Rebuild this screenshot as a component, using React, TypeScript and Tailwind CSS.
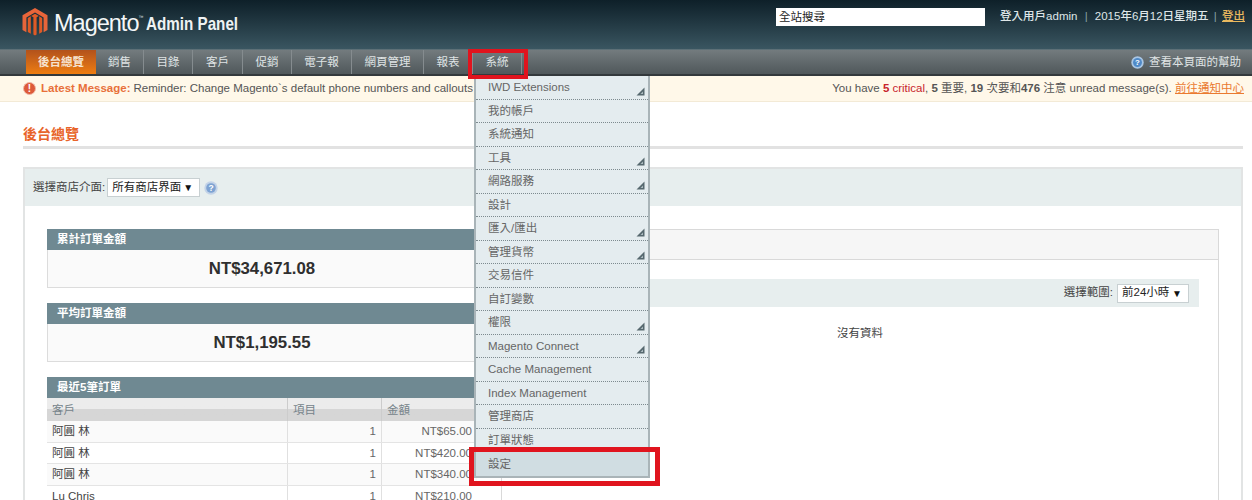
import React from "react";

const navItems = [
  { label: "銷售", w: "w-[48px]" },
  { label: "目錄", w: "w-[49px]" },
  { label: "客戶", w: "w-[50px]" },
  { label: "促銷", w: "w-[49px]" },
  { label: "電子報", w: "w-[60px]" },
  { label: "網頁管理", w: "w-[72px]" },
  { label: "報表", w: "w-[49px]" },
  { label: "系統", w: "w-[49px]" },
];

const menu: [string, boolean][] = [
  ["IWD Extensions", true],
  ["我的帳戶", false],
  ["系統通知", false],
  ["工具", true],
  ["網路服務", true],
  ["設計", false],
  ["匯入/匯出", true],
  ["管理貨幣", true],
  ["交易信件", false],
  ["自訂變數", false],
  ["權限", true],
  ["Magento Connect", true],
  ["Cache Management", false],
  ["Index Management", false],
  ["管理商店", false],
  ["訂單狀態", false],
];

const rows = [
  ["阿圓 林", "1", "NT$65.00"],
  ["阿圓 林", "1", "NT$420.00"],
  ["阿圓 林", "1", "NT$340.00"],
  ["Lu Chris", "1", "NT$210.00"],
];

function Logo() {
  return (
    <svg width="26" height="30" viewBox="0 0 26 30" className="shrink-0">
      <path d="M13 0 L25.5 7.2 V22 L21.6 24.2 V9.4 L13 4.4 L4.4 9.4 V24.2 L0.5 22 V7.2 Z" fill="#e8653a" />
      <path d="M11.4 9.2 V26.6 L13 27.6 L14.6 26.6 V9.2 L17.2 7.8 V25.8 L20.2 24 V10 L13 5.8 L5.8 10 V24 L8.8 25.8 V7.8 Z" fill="#df5a26" />
    </svg>
  );
}

function Arrow() {
  return (
    <svg width="9" height="9" viewBox="0 0 9 9" className="absolute right-[3px] bottom-[3px]">
      <path d="M8.5 0.5 V8.5 H0.5 Z" fill="#56686f" />
      <path d="M7 4.5 V7 H4.5 Z" fill="#aebcc1" />
    </svg>
  );
}

function HelpIcon({ size = 14, pale = false }: { size?: number; pale?: boolean }) {
  return (
    <svg width={size} height={size} viewBox="0 0 14 14" className="shrink-0">
      <circle cx="7" cy="7" r="6.7" fill={pale ? "#c3d3e8" : "#a9c6e4"} />
      <circle cx="7" cy="7" r="4.8" fill={pale ? "#7ea3d2" : "#4f8ac8"} />
      <text x="7" y="10" textAnchor="middle" fontSize="8.5" fontWeight="700" fill="#ffffff" fontFamily="Liberation Sans">?</text>
    </svg>
  );
}

function Select({ text, w }: { text: string; w: string }) {
  return (
    <div className={`${w} h-[19px] bg-white border border-[#c8d0d2] flex items-center justify-between pl-[4px] pr-[6px] text-[11.5px] text-[#222]`}>
      <span>{text}</span>
      <span className="text-[10px] text-[#111]">▼</span>
    </div>
  );
}

function Stat({ title, value }: { title: string; value: string }) {
  return (
    <div>
      <div className="h-[21px] bg-[#6f8992] pl-[10px] leading-[20px] font-bold text-white">{title}</div>
      <div className="h-[38px] bg-[#fafafa] border border-t-0 border-[#dcdcdc] flex items-center justify-center text-[16.8px] font-bold text-[#2f2f2f]">{value}</div>
    </div>
  );
}

export default function App() {
  return (
    <div className="relative w-[1252px] h-[500px] overflow-hidden bg-white font-['Liberation_Sans','Noto_Sans_CJK_TC',sans-serif] text-[11.5px] text-[#444]">
      {/* Header */}
      <header className="h-[49px] bg-gradient-to-b from-[#0e2029] to-[#3a5661] flex justify-between pl-[22px] pr-[7px]">
        <div className="flex items-start pt-[8px]">
          <Logo />
          <span className="ml-[6px] text-[23.5px] leading-[30px] tracking-[-1px] text-[#f4f7f8]">Magento</span>
          <span className="text-[5px] leading-[18px] text-[#dfe5e6]">™</span>
          <span className="ml-[3px] mt-[3px] w-[92px] text-[19px] leading-[26px] font-bold text-[#eef2f3] scale-x-[0.8] origin-left whitespace-nowrap">Admin Panel</span>
        </div>
        <div className="flex items-start pt-[8px]">
          <div className="w-[209px] h-[18px] bg-white pl-[3px] leading-[19px] text-[#222]">全站搜尋</div>
          <div className="ml-[15px] leading-[17px] text-[#dfe6e8] font-medium">
            登入用戶admin<span className="mx-[4px] text-[#8aa0a8]"> | </span>2015年6月12日星期五<span className="mx-[2px] text-[#8aa0a8]"> | </span><span className="underline text-[#e9b95f]">登出</span>
          </div>
        </div>
      </header>

      {/* Nav */}
      <nav className="h-[27px] border-t border-[#5d7077] border-b-[2px] border-b-[#33393c] bg-gradient-to-b from-[#737b7e] to-[#50585b] flex justify-between pl-[26px] pr-[11px]">
        <div className="flex">
          <div className="w-[70px] h-full pt-[1px] bg-gradient-to-b from-[#b2521b] to-[#ee7d10] flex items-center justify-center font-bold text-[#f6e3d0]">後台總覽</div>
          {navItems.map((n) => (
            <div key={n.label} className={`${n.w} h-full pt-[1px] border-r border-[#858c8f] flex items-center justify-center text-[#dfe3e4]`}>
              {n.label}
            </div>
          ))}
        </div>
        <div className="flex items-center gap-[5px] pt-[1px] text-[#dfe3e4]">
          <HelpIcon size={13} />
          查看本頁面的幫助
        </div>
      </nav>

      {/* Notice */}
      <div className="h-[26px] bg-[#fff8e9] border-b border-[#f3ead6] flex items-center justify-between pl-[23px] pr-[8px] text-[#555]">
        <div className="flex items-center">
          <span className="w-[13px] h-[13px] rounded-full bg-[#dd5a3a] border border-[#f0b8a6] text-white text-[10px] leading-[11px] font-bold text-center mr-[5px]">!</span>
          <span className="font-bold text-[#e8703a]">Latest Message:</span>
          <span className="ml-[3px] w-[340px] truncate">Reminder: Change Magento`s default phone numbers and callouts</span>
        </div>
        <div>
          You have <span className="text-[#c8242c]"><b>5</b> critical</span>, <b>5</b> 重要, <b>19</b> 次要和<b>476</b> 注意 unread message(s). <span className="underline text-[#ea7a30]">前往通知中心</span>
        </div>
      </div>

      {/* Main */}
      <main className="pl-[23px] pr-[9px]">
        <div className="pt-[22px] h-[47px] border-b-[3px] border-[#e2e2e2] text-[14px] leading-[20px] font-bold text-[#e8642a]">後台總覽</div>

        <section className="mt-[18px] border-2 border-[#e2e4e4] border-b-0 h-[400px]">
          <div className="h-[37px] bg-[#e7eeee] flex items-center pl-[8px] text-[#444]">
            選擇商店介面:
            <Select text="所有商店界面" w="w-[93px] ml-[2px]" />
            <span className="ml-[4px]"><HelpIcon size={14} pale /></span>
          </div>

          <div className="flex pl-[22px] pt-[23px] pr-[22px]">
            <div className="w-[430px] flex flex-col gap-[15px]">
              <Stat title="累計訂單金額" value="NT$34,671.08" />
              <Stat title="平均訂單金額" value="NT$1,195.55" />
              <div>
                <div className="h-[21px] bg-[#6f8992] pl-[10px] leading-[20px] font-bold text-white">最近5筆訂單</div>
                <div className="grid grid-cols-[241px_94px_95px] h-[23px] bg-gradient-to-b from-[#ececec] from-50% to-[#d6d6d6] to-50% text-[#75838a] leading-[25px]">
                  <div className="pl-[5px] border-r border-[#ccc]">客戶</div>
                  <div className="pl-[5px] border-r border-[#ccc]">項目</div>
                  <div className="pl-[5px]">金額</div>
                </div>
                {rows.map((r, i) => (
                  <div key={i} className={`grid grid-cols-[241px_94px_95px] h-[21.5px] leading-[20px] border-b border-[#e4e4e4] ${i % 2 === 0 ? "bg-[#fafafa]" : "bg-white"}`}>
                    <div className="pl-[5px] border-r border-[#e0e0e0] text-[#444]">{r[0]}</div>
                    <div className="pr-[5px] border-r border-[#e0e0e0] text-right text-[#666]">{r[1]}</div>
                    <div className="pr-[5px] text-right text-[#666]">{r[2]}</div>
                  </div>
                ))}
              </div>
            </div>

            <div className="ml-[24px] flex-1 border border-[#d9d9d9] h-[300px]">
              <div className="h-[30px] bg-[#f6f6f6] border-b border-[#d9d9d9]" />
              <div className="mt-[19px] mr-[19px] h-[28px] bg-[#e7eeee] flex items-center justify-end pr-[10px] text-[#444]">
                選擇範圍:
                <Select text="前24小時" w="w-[72px] ml-[4px]" />
              </div>
              <div className="mt-[18px] text-center text-[#444]">沒有資料</div>
            </div>
          </div>
        </section>
      </main>

      {/* Dropdown menu overlay */}
      <div className="absolute left-[474px] top-[76px] w-[176px] bg-[#e4ecef] border-x-2 border-b-2 border-[#a9b4b8]">
        {menu.map(([label, arrow]) => (
          <div key={label} className="relative h-[23.5px] pl-[12px] leading-[23px] text-[#666] border-b border-dotted border-[#7d8a8f]">
            {label}
            {arrow && <Arrow />}
          </div>
        ))}
        <div className="h-[24px] pl-[12px] leading-[24px] text-[#666] bg-[#d0dde2]">設定</div>
      </div>

      {/* Red annotation boxes */}
      <div className="absolute left-[468px] top-[49px] w-[60px] h-[30px] border-[4px] border-[#e0141e]" />
      <div className="absolute left-[469px] top-[447px] w-[191px] h-[39px] border-[5px] border-[#e0141e]" />
    </div>
  );
}
